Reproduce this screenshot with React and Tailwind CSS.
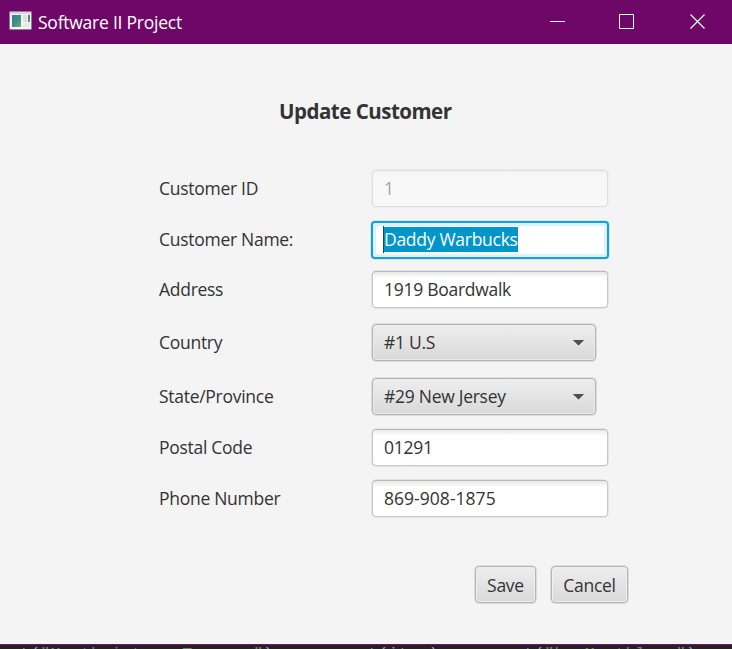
import React from "react";

const fieldBase =
  "flex h-[37px] w-[236px] items-center rounded-[4px] border pb-px pl-[11px] whitespace-nowrap";

function Row({ label, gap = "", children }) {
  return (
    <div className={`flex h-[38px] items-start ${gap}`}>
      <span className="w-[213px] shrink-0 leading-[36px] whitespace-nowrap">{label}</span>
      {children}
    </div>
  );
}

function TextField({ children, spacing = "" }) {
  return (
    <div
      className={`${fieldBase} border-[#c8c8c8] border-t-[#b9b9b9] bg-[linear-gradient(#e8e8e8,#ffffff_6px)] shadow-[0_0_0_0.5px_#d4d4d4] ${spacing}`}
    >
      {children}
    </div>
  );
}

function ComboBox({ children }) {
  return (
    <div className="flex h-[37px] w-[224px] items-center justify-between rounded-[4px] border border-[#b5b5b5] bg-[linear-gradient(#eeeeee,#d9d9d9)] pr-[10px] pl-[11px] whitespace-nowrap shadow-[inset_0_0_0_1px_#ebebeb,0_0_0_0.5px_#c4c4c4]">
      <span className="pb-px">{children}</span>
      <svg width="13" height="8" viewBox="0 0 13 8">
        <path d="M1.5 2.5h10L6.5 7.8z" fill="#fafafa" />
        <path d="M.8 1h11.4L6.5 6.8z" fill="#505050" />
      </svg>
    </div>
  );
}

function Button({ children, width }) {
  return (
    <button
      className={`flex h-[37px] items-center justify-center rounded-[4px] border border-[#b5b5b5] bg-[linear-gradient(#eeeeee,#d9d9d9)] shadow-[inset_0_0_0_1px_#f0f0f0,0_0_0_0.5px_#c4c4c4] ${width}`}
    >
      {children}
    </button>
  );
}

function AppIcon() {
  return (
    <svg className="mb-[3px] ml-[9px]" width="23" height="19" viewBox="0 0 23 19">
      <defs>
        <linearGradient id="screen" x1="0" y1="0" x2="1" y2="1">
          <stop offset="0" stopColor="#3f789c" />
          <stop offset="0.55" stopColor="#429087" />
          <stop offset="1" stopColor="#65b66d" />
        </linearGradient>
      </defs>
      <rect x=".5" y=".5" width="22" height="18" rx="1" fill="#f4f5f4" stroke="#9b7b9b" />
      <rect x="1" y="1" width="21" height="2" fill="#d4d7d8" />
      <rect x="3" y="4" width="9" height="12" fill="url(#screen)" />
      <rect x="14" y="4" width="4" height="7" fill="#dddfdf" />
      <rect x="19" y="4" width="2" height="7" fill="url(#screen)" />
      <rect x="14" y="12" width="7" height="4" fill="#e8eae9" />
    </svg>
  );
}

export default function App() {
  return (
    <div className="flex h-[649px] w-[732px] flex-col overflow-hidden bg-[#f4f4f4] [font-family:'Open_Sans','Noto_Sans',sans-serif] text-[17.5px] leading-[24px] tracking-[-0.28px] text-[#333333]">
      <header className="flex h-[44px] shrink-0 items-center bg-[#6f0769] text-white">
        <AppIcon />
        <span className="mb-px ml-[6px] tracking-[-0.24px] whitespace-nowrap">Software II Project</span>
        <svg className="ml-auto" width="182" height="44" viewBox="0 0 182 44" fill="none" stroke="white">
          <path d="M0 21.5h15" />
          <path d="M69.5 14.5h14v14h-14z" />
          <path d="M140.5 14.5l14 14M154.5 14.5l-14 14" strokeWidth="1.2" />
        </svg>
      </header>

      <main className="flex h-[600px] shrink-0 flex-col">
        <h1 className="mt-[54px] ml-[279px] text-[20.5px] leading-[26px] font-bold tracking-[-0.5px] whitespace-nowrap">
          Update Customer
        </h1>
        <div className="mt-[46px] ml-[159px] flex flex-col">
          <Row label="Customer ID">
            <div className={`${fieldBase} border-[#dedede] bg-[linear-gradient(#f3f3f3,#f8f8f8_6px)] text-[#a3a3a3] shadow-[0_0_0_0.5px_#e8e8e8]`}>
              1
            </div>
          </Row>
          <Row label="Customer Name:" gap="mt-[13px]">
            <div className="-ml-px flex h-[38px] w-[238px] items-center rounded-[4px] border-2 border-[#169fd0] bg-white pb-px pl-[10px] whitespace-nowrap shadow-[inset_0_0_0_3px_#ddf1f8,0_0_0_1px_#c9e9f4]">
              <span className="h-[27px] border-l-[1px] border-[#24465a]" />
              <span className="h-[25px] bg-[#0096c9] leading-[24px] text-white">Daddy Warbucks</span>
            </div>
          </Row>
          <Row label="Address" gap="mt-[12px]">
            <TextField>1919 Boardwalk</TextField>
          </Row>
          <Row label="Country" gap="mt-[15px]">
            <ComboBox>#1 U.S</ComboBox>
          </Row>
          <Row label="State/Province" gap="mt-[16px]">
            <ComboBox>#29 New Jersey</ComboBox>
          </Row>
          <Row label="Postal Code" gap="mt-[13px]">
            <TextField>01291</TextField>
          </Row>
          <Row label="Phone Number" gap="mt-[13px]">
            <TextField spacing="tracking-[0.03px]">869-908-1875</TextField>
          </Row>
        </div>
        <div className="mt-[48px] ml-[475px] flex gap-[15px]">
          <Button width="w-[61px]">Save</Button>
          <Button width="w-[77px]">Cancel</Button>
        </div>
      </main>

      <footer className="flex h-[5px] shrink-0 overflow-hidden border-t border-[#7d0b76] bg-[#232323] [font-family:'Liberation_Mono',monospace] text-[16.6px] leading-[19px] tracking-[0.18px] whitespace-pre text-[#6a8759]">
        <span className="ml-[20px] w-[348px]">
          <span className="text-[#8ba3b5]">t(</span>{'"Month i t    Type   "'}
          <span className="text-[#8ba3b5]">)</span>
        </span>
        <span className="w-[156px] text-[#8ba3b5]">t(item)</span>
        <span>
          <span className="text-[#8ba3b5]">t(</span>{'"by Monthly  "'}
          <span className="text-[#8ba3b5]">)</span>
        </span>
      </footer>
    </div>
  );
}
